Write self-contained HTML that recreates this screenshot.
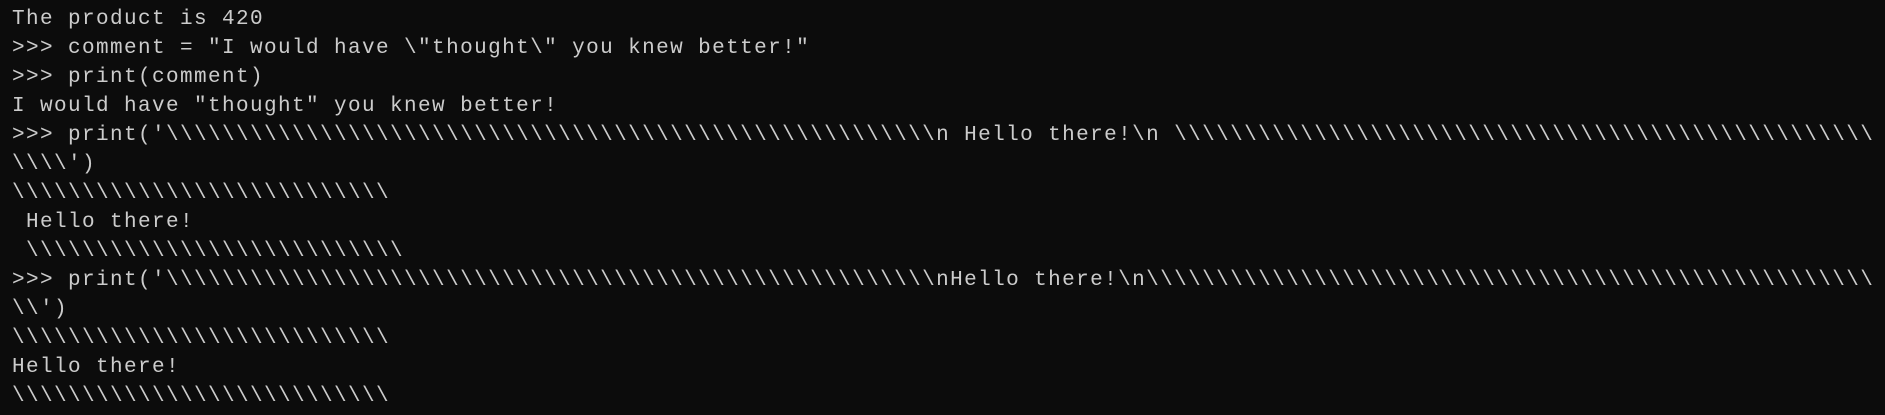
<!DOCTYPE html>
<html><head><meta charset="utf-8"><style>
html,body{margin:0;padding:0;background:#0c0c0c;width:1885px;height:415px;overflow:hidden}
pre{margin:0;padding:5px 0 0 12px;font-family:"Liberation Mono",monospace;font-size:21px;letter-spacing:1.4px;line-height:29px;color:#cccccc;white-space:pre}
</style></head><body><pre>The product is 420
&gt;&gt;&gt; comment = "I would have \"thought\" you knew better!"
&gt;&gt;&gt; print(comment)
I would have "thought" you knew better!
&gt;&gt;&gt; print('\\\\\\\\\\\\\\\\\\\\\\\\\\\\\\\\\\\\\\\\\\\\\\\\\\\\\\\n Hello there!\n \\\\\\\\\\\\\\\\\\\\\\\\\\\\\\\\\\\\\\\\\\\\\\\\\\
\\\\')
\\\\\\\\\\\\\\\\\\\\\\\\\\\
 Hello there!
 \\\\\\\\\\\\\\\\\\\\\\\\\\\
&gt;&gt;&gt; print('\\\\\\\\\\\\\\\\\\\\\\\\\\\\\\\\\\\\\\\\\\\\\\\\\\\\\\\nHello there!\n\\\\\\\\\\\\\\\\\\\\\\\\\\\\\\\\\\\\\\\\\\\\\\\\\\\\
\\')
\\\\\\\\\\\\\\\\\\\\\\\\\\\
Hello there!
\\\\\\\\\\\\\\\\\\\\\\\\\\\</pre></body></html>
